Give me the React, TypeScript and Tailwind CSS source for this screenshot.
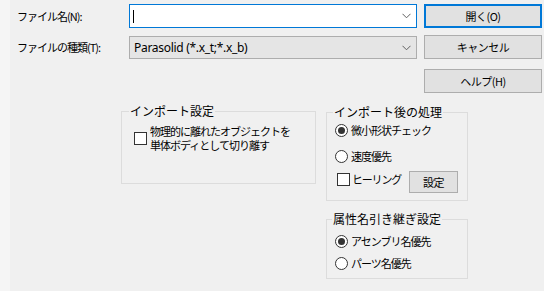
const jp = "font-['Noto_Sans_CJK_JP','Noto_Sans',sans-serif]";

function Chevron() {
  return (
    <svg width="9" height="6" viewBox="0 0 9 6" className="shrink-0">
      <path d="M0.5 0.8 L4.5 4.8 L8.5 0.8" fill="none" stroke="#606060" strokeWidth="1" />
    </svg>
  );
}

function CheckBox() {
  return <div className="h-[13px] w-[13px] shrink-0 border border-[#333333] bg-white" />;
}

function Radio({ checked }: { checked?: boolean }) {
  return (
    <div className="flex h-[13px] w-[13px] shrink-0 items-center justify-center rounded-full border border-[#333333] bg-white">
      {checked && <div className="h-[7px] w-[7px] rounded-full bg-[#333333]" />}
    </div>
  );
}

function Button({ label, primary, className = '' }: { label: string; primary?: boolean; className?: string }) {
  return (
    <div
      className={`flex items-center justify-center bg-[#e1e1e1] text-[11px] leading-none tracking-[-0.5px] ${
        primary ? 'border-2 border-[#0078d7]' : 'border border-[#adadad]'
      } ${className}`}
    >
      {label}
    </div>
  );
}

function GroupTitle({ text, ml }: { text: string; ml: string }) {
  return (
    <div className={`-mt-[7px] w-fit bg-[#f0f0f0] px-[1px] text-[12px] leading-[12px] ${ml}`}>
      {text}
    </div>
  );
}

export default function App() {
  return (
    <div className={`flex h-[291px] w-[544px] overflow-hidden bg-[#f0f0f0] text-black ${jp}`}>
      <div className="w-[10px] shrink-0 bg-[#f5f5f5]" />
      <div className="flex-1 pt-[4px]">
        {/* file name */}
        <div className="flex h-[24px] items-center">
          <div className="w-[119px] pl-[7px] text-[11px] tracking-[-1px]">ファイル名(N):</div>
          <div className="flex h-[24px] w-[288px] items-center justify-between border border-[#0078d7] bg-white pl-[3px] pr-[5px]">
            <div className="h-[13px] w-px bg-black" />
            <Chevron />
          </div>
          <Button label="開く(O)" primary className="ml-[7px] h-[24px] w-[118px]" />
        </div>

        {/* file type */}
        <div className="mt-[7px] flex h-[24px] items-end">
          <div className="w-[119px] self-center pl-[7px] text-[11px] tracking-[-1px]">ファイルの種類(T):</div>
          <div className="flex h-[23px] w-[288px] items-center justify-between border border-[#adadad] bg-[#e5e5e5] pl-[4px] pr-[5px]">
            <span className="font-['Noto_Sans',sans-serif] text-[12px] tracking-[-0.3px]">Parasolid (*.x_t;*.x_b)</span>
            <Chevron />
          </div>
          <Button label="キャンセル" className="ml-[7px] h-[24px] w-[118px]" />
        </div>

        {/* help */}
        <div className="mt-[10px] flex pl-[414px]">
          <Button label="ヘルプ(H)" className="h-[24px] w-[118px]" />
        </div>

        {/* option groups */}
        <div className="mt-[18px] flex items-start gap-[10px] pl-[111px]">
          <div className="h-[73px] w-[195px] border border-[#dcdcdc]">
            <GroupTitle text="インポート設定" ml="ml-[7px]" />
            <div className="mt-[8px] flex items-center gap-[3px] pl-[12px]">
              <CheckBox />
              <div className="flex flex-col gap-[1px] text-[11px] leading-[13px] tracking-[-1px]">
                <span>物理的に離れたオブジェクトを</span>
                <span>単体ボディとして切り離す</span>
              </div>
            </div>
          </div>

          <div className="flex flex-col">
            <div className="mt-[1px] h-[89px] w-[142px] border border-[#dcdcdc]">
              <GroupTitle text="インポート後の処理" ml="ml-[6px]" />
              <div className="mt-[6px] flex h-[13px] items-center gap-[3px] pl-[8px] text-[11px] tracking-[-1px]">
                <Radio checked />
                <span>微小形状チェック</span>
              </div>
              <div className="mt-[13px] flex h-[13px] items-center gap-[3px] pl-[8px] text-[11px] tracking-[-1px]">
                <Radio />
                <span>速度優先</span>
              </div>
              <div className="mt-[8px] flex h-[22px] items-start justify-between pl-[10px] pr-[9px]">
                <div className="mt-[2px] flex items-center gap-[2px] text-[11px] leading-[13px] tracking-[-1.2px]">
                  <CheckBox />
                  <span>ヒーリング</span>
                </div>
                <Button label="設定" className="h-[22px] w-[49px]" />
              </div>
            </div>

            <div className="mt-[18px] h-[60px] w-[142px] border border-[#dcdcdc]">
              <GroupTitle text="属性名引き継ぎ設定" ml="ml-[5px]" />
              <div className="mt-[10px] flex h-[13px] items-center gap-[3px] pl-[8px] text-[11px] tracking-[-1px]">
                <Radio checked />
                <span>アセンブリ名優先</span>
              </div>
              <div className="mt-[9px] flex h-[13px] items-center gap-[3px] pl-[8px] text-[11px] tracking-[-1px]">
                <Radio />
                <span>パーツ名優先</span>
              </div>
            </div>
          </div>
        </div>
      </div>
    </div>
  );
}
